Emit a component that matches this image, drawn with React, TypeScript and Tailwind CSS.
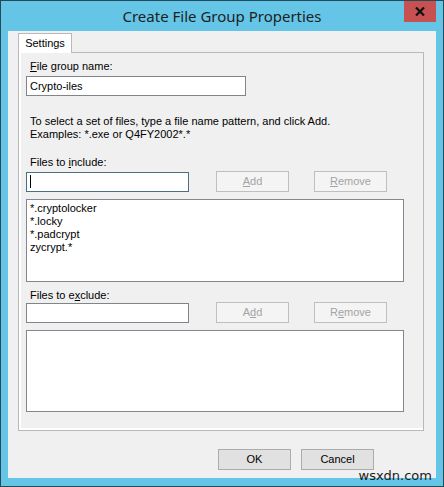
import React from "react";

const ui = "font-['Liberation_Sans',Arial,sans-serif] text-[11px] leading-[13px] text-black";

function WinButton(props: { children: React.ReactNode; disabled?: boolean; className?: string }) {
  return (
    <div
      className={
        "flex h-[21px] w-[73px] items-center justify-center border " +
        (props.disabled
          ? "border-[#bfbfbf] bg-[#f4f4f4] text-[#a3a3a3] "
          : "border-[#acacac] bg-[#e1e1e1] text-black ") +
        (props.className ?? "")
      }
    >
      {props.children}
    </div>
  );
}

function TextBox(props: { value?: string; focused?: boolean }) {
  return (
    <div
      className={
        "flex h-[20px] w-[163px] items-center bg-white px-[3px] border " +
        (props.focused ? "border-[#4d6f83]" : "border-[#7f8589]")
      }
    >
      {props.focused && <span className="h-[13px] w-px bg-black" />}
      {props.value}
    </div>
  );
}

function ListBox(props: { items: string[]; height: string }) {
  return (
    <div className={"w-[378px] border border-[#828790] bg-white px-[3px] pt-[2px] " + props.height}>
      {props.items.map((it) => (
        <div key={it}>{it}</div>
      ))}
    </div>
  );
}

function PatternRow(props: { focused?: boolean; second?: boolean }) {
  return (
    <div className="flex items-center">
      <TextBox focused={props.focused} />
      <WinButton disabled className="ml-[27px]">
        {props.second ? (
          <span>A<u>d</u>d</span>
        ) : (
          <span><u>A</u>dd</span>
        )}
      </WinButton>
      <WinButton disabled className="ml-[25px]">
        {props.second ? (
          <span>R<u>e</u>move</span>
        ) : (
          <span><u>R</u>emove</span>
        )}
      </WinButton>
    </div>
  );
}

export default function App() {
  return (
    <div className="relative flex h-[487px] w-[444px] flex-col border border-[#24495a] bg-[#64c5e7]">
      {/* title bar */}
      <div className="flex h-[30px] items-center justify-center font-['Noto_Sans',sans-serif] text-[15px] text-[#1e1e1e]">
        Create File Group Properties
      </div>
      <div className="absolute right-[7px] top-0 flex h-[21px] w-[32px] items-center justify-center bg-[#c75050]">
        <svg width="10" height="9" viewBox="0 0 10 9">
          <path d="M1 0.5 L9 8.5 M9 0.5 L1 8.5" stroke="#111" strokeWidth="2.2" />
        </svg>
      </div>

      {/* client area */}
      <div className={"mx-[7px] mb-[8px] flex flex-1 flex-col bg-[#f0f0f0] " + ui}>
        <div className="ml-[10px] mt-[2px] flex">
          <div className="relative -mb-px flex h-[20px] w-[54px] items-center justify-center border border-b-0 border-[#b9b9b9] bg-white">
            Settings
          </div>
        </div>
        <div className="ml-[10px] h-[379px] w-[406px] border border-[#b9b9b9] bg-[#f0f0f0] pl-[7px] pt-[7px] shadow-[inset_0_-2px_0_#fff,inset_2px_0_0_#fff]">
          <div className="ml-[4px]"><u>F</u>ile group name:</div>
          <div className="mt-[3px] flex h-[20px] w-[220px] items-center border border-[#7f8589] bg-white px-[3px]">
            Crypto-iles
          </div>
          <div className="ml-[4px] mt-[19px]">
            To select a set of files, type a file name pattern, and click Add.
            <br />
            Examples: *.exe or Q4FY2002*.*
          </div>
          <div className="ml-[4px] mt-[15px]">Files to <u>i</u>nclude:</div>
          <div className="mt-[2px]">
            <PatternRow focused />
          </div>
          <div className="mt-[7px]">
            <ListBox height="h-[83px]" items={["*.cryptolocker", "*.locky", "*.padcrypt", "zycrypt.*"]} />
          </div>
          <div className="ml-[4px] mt-[7px]">Files to e<u>x</u>clude:</div>
          <div>
            <PatternRow second />
          </div>
          <div className="mt-[7px]">
            <ListBox height="h-[82px]" items={[]} />
          </div>
        </div>

        <div className="ml-[210px] mt-[18px] flex gap-[10px]">
          <WinButton className="h-[21px]">OK</WinButton>
          <WinButton className="h-[21px]">Cancel</WinButton>
        </div>
      </div>

      <div className="absolute bottom-[3px] right-[11px] font-['DejaVu_Sans',sans-serif] text-[13px] leading-[14px] text-[#1b1b1b]">
        wsxdn.com
      </div>
    </div>
  );
}
